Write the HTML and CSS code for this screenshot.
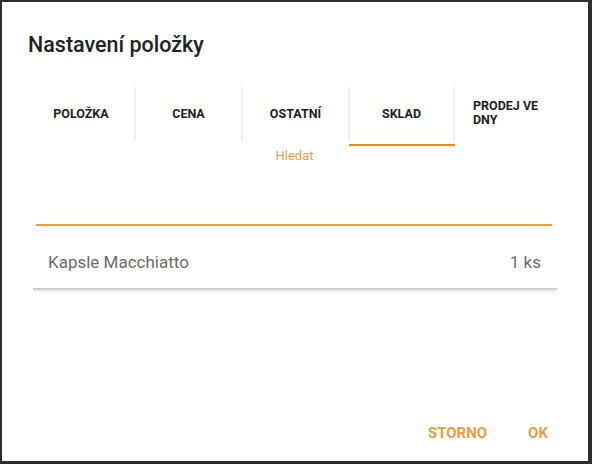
FILE: index.html
```html
<!doctype html>
<html lang="cs">
<head>
	<meta charset="UTF-8">
	<title>Nastavení položky</title>
	<link rel="stylesheet" href="styles.css">
</head>
<body>
	<div class="dialog">
		<h1 class="title">Nastavení položky</h1>

		<ul class="tabs">
			<li class="tab">POLOŽKA</li>
			<li class="tab">CENA</li>
			<li class="tab">OSTATNÍ</li>
			<li class="tab active">SKLAD</li>
			<li class="tab wrap">PRODEJ VE DNY</li>
		</ul>

		<div class="hint-row">
			<span class="hint">Hledat</span>
		</div>

		<div class="search"></div>

		<div class="item">
			<span class="name">Kapsle Macchiatto</span>
			<span class="qty">1 ks</span>
		</div>

		<div class="actions">
			<span class="btn">STORNO</span>
			<span class="btn">OK</span>
		</div>
	</div>
</body>
</html>
```

FILE: styles.css
```css
*{
	margin: 0;
	padding: 0;
	list-style-type: none;
	box-sizing: border-box;
}
html,body{
	height: 100%;
}
body{
	background: #2e2e2e;
	padding: 2px 4px 3px 2px;
	font-family: Roboto, "Noto Sans", sans-serif;
}
.dialog{
	background: #fff;
	height: 100%;
	padding: 0 0 0 26px;
	display: flex;
	flex-direction: column;
}
.title{
	font-size: 21.5px;
	font-weight: 500;
	color: #212121;
	margin-top: 31px;
	line-height: 24px;
}
.tabs{
	display: flex;
	margin-top: 29px;
	height: 58px;
}
.tab{
	width: 107px;
	display: flex;
	align-items: center;
	justify-content: center;
	font-size: 12.5px;
	font-weight: 700;
	color: #1e1e1e;
	border-left: 2px solid #ececec;
	position: relative;
	top: 1px;
	height: 53px;
}
.tab:first-child{
	border-left: none;
	width: 106px;
}
.tab.active{
	border-right: 2px solid #ececec;
}
.tab.active::after{
	content: "";
	position: absolute;
	left: -1px;
	right: -2px;
	bottom: -6px;
	height: 2px;
	background: #ee8a1e;
}
.tab.active + .tab{
	border-left: none;
}
.tab.wrap{
	justify-content: flex-start;
	align-items: flex-start;
	padding: 12px 0 0 18px;
	line-height: 13.5px;
	width: 100px;
}
.hint-row{
	display: flex;
	width: 320px;
	justify-content: flex-end;
	height: 18px;
	margin-top: 4px;
}
.hint{
	width: 107px;
	text-align: center;
	font-size: 13px;
	color: #e99a3e;
}
.search{
	margin: 58px 36px 0 8px;
	height: 2px;
	background: #f0a030;
}
.item{
	display: flex;
	justify-content: space-between;
	align-items: center;
	margin: 0 31px 0 5px;
	height: 64px;
	padding: 9px 16px 0 15px;
	border-bottom: 2px solid #d0d0d0;
	box-shadow: 0 3px 2px -1px rgba(0,0,0,0.08);
	font-size: 17px;
	color: #6b6b6b;
}
.actions{
	margin-top: auto;
	display: flex;
	justify-content: flex-end;
	gap: 41px;
	padding: 0 40px 19px 0;
}
.btn{
	font-size: 15px;
	font-weight: 700;
	color: #eb9a45;
}
```
